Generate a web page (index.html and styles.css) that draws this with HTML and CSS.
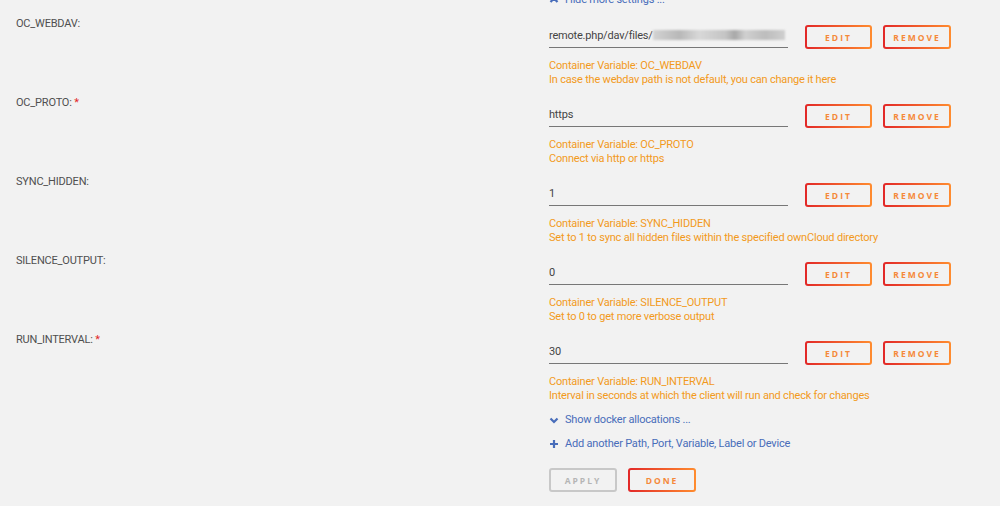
FILE: index.html
```html
<!DOCTYPE html>
<html lang="en">
<head>
    <meta charset="UTF-8">
    <meta name="viewport" content="width=device-width, initial-scale=1.0">
    <title>Docker Container - Variables</title>
    <link rel="stylesheet" href="styles.css">
</head>
<body>

<div class="form">
    <div class="toggle-line top-line">
        <span class="spacer"></span>
        <a class="link">
            <svg class="ico" viewBox="0 0 10 10"><path d="M1.5 7 L5 3.5 L8.5 7" fill="none" stroke="currentColor" stroke-width="2.2"/></svg>
            Hide more settings ...
        </a>
    </div>

    <!-- config rows -->
    <div class="row">
        <div class="label">OC_WEBDAV:</div>
        <div class="field">
            <div class="controls">
                <div class="input">remote.php/dav/files/<span class="blurred"></span></div>
                <button class="btn">EDIT</button>
                <button class="btn">REMOVE</button>
            </div>
            <div class="desc">Container Variable: OC_WEBDAV<br>In case the webdav path is not default, you can change it here</div>
        </div>
    </div>

    <div class="row">
        <div class="label">OC_PROTO: <span class="req">*</span></div>
        <div class="field">
            <div class="controls">
                <div class="input">https</div>
                <button class="btn">EDIT</button>
                <button class="btn">REMOVE</button>
            </div>
            <div class="desc">Container Variable: OC_PROTO<br>Connect via http or https</div>
        </div>
    </div>

    <div class="row">
        <div class="label">SYNC_HIDDEN:</div>
        <div class="field">
            <div class="controls">
                <div class="input">1</div>
                <button class="btn">EDIT</button>
                <button class="btn">REMOVE</button>
            </div>
            <div class="desc">Container Variable: SYNC_HIDDEN<br>Set to 1 to sync all hidden files within the specified ownCloud directory</div>
        </div>
    </div>

    <div class="row">
        <div class="label">SILENCE_OUTPUT:</div>
        <div class="field">
            <div class="controls">
                <div class="input">0</div>
                <button class="btn">EDIT</button>
                <button class="btn">REMOVE</button>
            </div>
            <div class="desc">Container Variable: SILENCE_OUTPUT<br>Set to 0 to get more verbose output</div>
        </div>
    </div>

    <div class="row">
        <div class="label">RUN_INTERVAL: <span class="req">*</span></div>
        <div class="field">
            <div class="controls">
                <div class="input">30</div>
                <button class="btn">EDIT</button>
                <button class="btn">REMOVE</button>
            </div>
            <div class="desc">Container Variable: RUN_INTERVAL<br>Interval in seconds at which the client will run and check for changes</div>
        </div>
    </div>

    <div class="toggle-line show-line">
        <span class="spacer"></span>
        <a class="link">
            <svg class="ico" viewBox="0 0 10 10"><path d="M1.5 3.5 L5 7 L8.5 3.5" fill="none" stroke="currentColor" stroke-width="2.2"/></svg>
            Show docker allocations ...
        </a>
    </div>
    <div class="toggle-line add-line">
        <span class="spacer"></span>
        <a class="link">
            <svg class="ico" viewBox="0 0 10 10"><path d="M5 1 V9 M1 5 H9" fill="none" stroke="currentColor" stroke-width="2.2"/></svg>
            Add another Path, Port, Variable, Label or Device
        </a>
    </div>

    <div class="toggle-line actions">
        <span class="spacer"></span>
        <div class="action-btns">
            <button class="btn btn-off">APPLY</button>
            <button class="btn">DONE</button>
        </div>
    </div>
</div>

</body>
</html>
```

FILE: styles.css
```css
body { background-color: #f2f2f2; margin: 0; font-family: Roboto, 'Noto Sans', sans-serif; font-size: 11px; letter-spacing: -0.2px; color: #4f4f4f; overflow: hidden; }

.form { padding-left: 16px; padding-top: 1px; }

/* Rows: label on the left, inputs on the right */
.row { display: flex; margin-bottom: 9px; }
.label { width: 533px; flex-shrink: 0; line-height: 14px; color: #4f4f4f; }
.req { color: #e22828; }
.field { padding-top: 8px; }
.controls { display: flex; align-items: flex-start; height: 24px; }
.input { width: 239px; height: 22px; line-height: 22px; border-bottom: 1px solid #777; color: #444; margin-right: 17px; white-space: nowrap; overflow: hidden; }
.blurred { display: inline-block; width: 132px; height: 10px; vertical-align: -1px; background: linear-gradient(90deg, #d3d3d3 0, #b8b8b8 20%, #d8d8d8 35%, #c4c4c4 55%, #a8a8a8 62%, #d0d0d0 70%, #bdbdbd 85%, #cfcfcf 100%); filter: blur(1px); }
.desc { margin-top: 10px; line-height: 14px; color: #f29a1c; }

/* Buttons */
.btn { height: 24px; padding: 0; border: 2px solid transparent; border-radius: 3px; background: linear-gradient(#f2f2f2, #f2f2f2) padding-box, linear-gradient(90deg, #e22828, #ff8c2f) border-box; color: #f5893a; font-family: 'Open Sans', sans-serif; font-size: 8.5px; font-weight: bold; letter-spacing: 2px; cursor: pointer; }
.controls .btn:nth-of-type(1) { width: 67px; margin-right: 11px; }
.controls .btn:nth-of-type(2) { width: 68px; }
.btn-off { background: #f2f2f2; border-color: #c8c8c8; color: #b5b5b5; }

/* Toggle links and actions */
.toggle-line { display: flex; line-height: 14px; }
.spacer { width: 533px; flex-shrink: 0; }
.link { color: #486dba; display: flex; align-items: center; gap: 6px; }
.ico { width: 10px; height: 10px; }
.top-line { margin-top: -8px; margin-bottom: 10px; }
.show-line { margin-top: 10px; }
.add-line { margin-top: 10px; }
.actions { margin-top: 17px; }
.action-btns { display: flex; gap: 11px; }
.action-btns .btn { width: 68px; }
```
